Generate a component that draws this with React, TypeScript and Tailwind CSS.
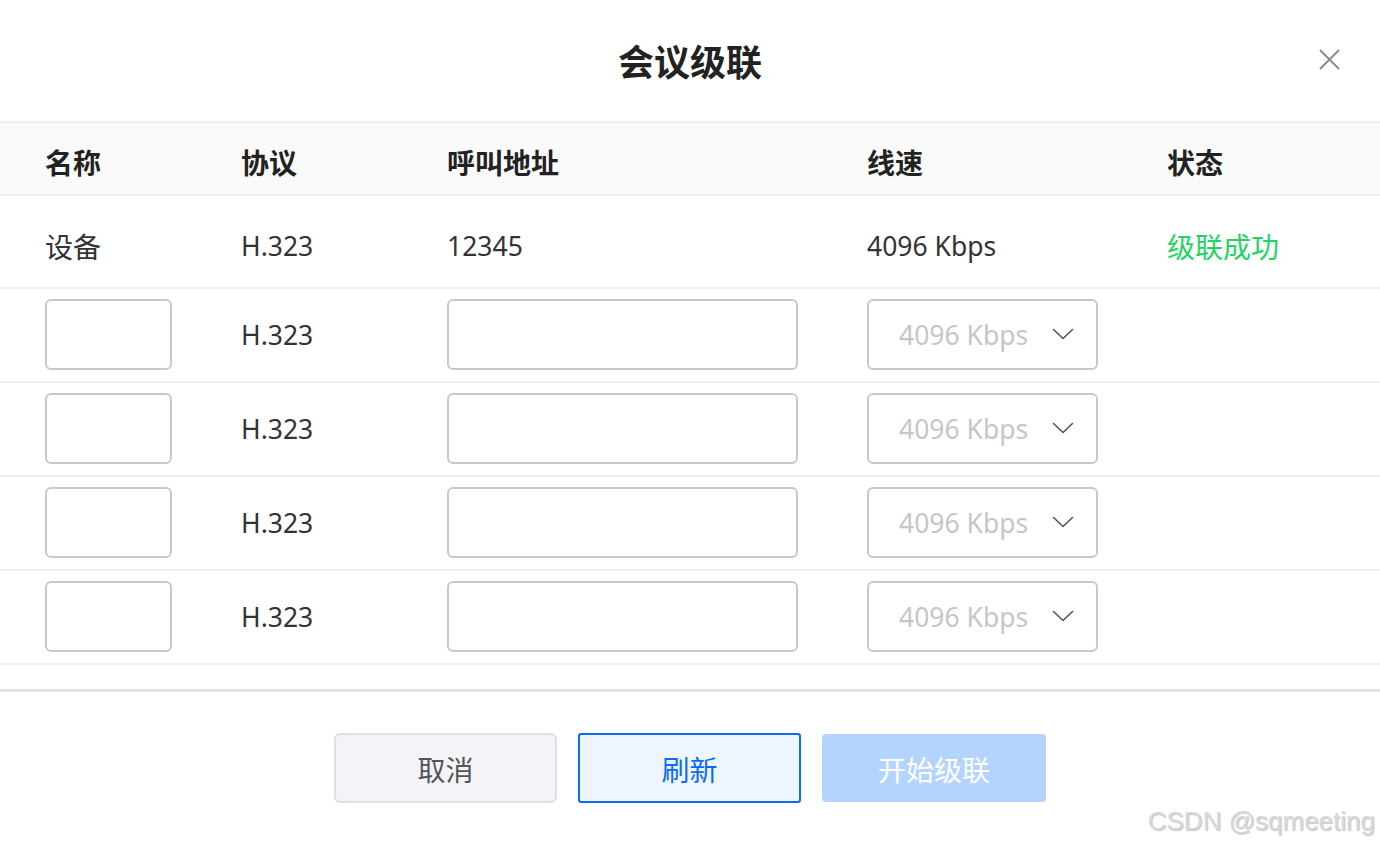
import { useState } from "react";

const font = { fontFamily: '"Noto Sans", "Noto Sans CJK SC", sans-serif' };

const rows = [1, 2, 3, 4];

function Chevron() {
  return (
    <svg width="22" height="12" viewBox="0 0 22 12" fill="none">
      <path d="M1.5 1.5 L11 10.5 L20.5 1.5" stroke="#555" strokeWidth="1.6" strokeLinecap="round" strokeLinejoin="round" />
    </svg>
  );
}

function EditRow() {
  const [name, setName] = useState("");
  const [addr, setAddr] = useState("");
  return (
    <div className="grid grid-cols-[196px_206px_420px_300px_1fr] items-center h-[94px] pl-[45px] pb-[2px] border-b-2 border-[#eef0f4]">
      <input
        value={name}
        onChange={(e) => setName(e.target.value)}
        className="w-[127px] h-[71px] rounded-[6px] border-2 border-[#c9c9c9] outline-none px-3 text-[26.5px] text-[#333]"
      />
      <div className="text-[26.5px] text-[#333] pt-[4px]">H.323</div>
      <input
        value={addr}
        onChange={(e) => setAddr(e.target.value)}
        className="w-[351px] h-[71px] rounded-[6px] border-2 border-[#c9c9c9] outline-none px-4 text-[26.5px] text-[#333]"
      />
      <div className="w-[231px] h-[71px] rounded-[6px] border-2 border-[#c9c9c9] flex items-center justify-between pl-[30px] pr-[22px]">
        <span className="text-[26.5px] text-[#c6c6c6] pt-[4px]">4096 Kbps</span>
        <Chevron />
      </div>
      <div />
    </div>
  );
}

export default function App() {
  return (
    <div className="relative w-full h-[846px] bg-white overflow-hidden" style={font}>
      <div className="h-[123px] border-b-2 border-[#eceff4] flex items-center justify-center relative">
        <h1 className="text-[36px] font-bold text-[#222] pt-[4px]">会议级联</h1>
        <button className="absolute right-[40px] top-[49px] w-[21px] h-[21px]">
          <svg width="21" height="21" viewBox="0 0 21 21">
            <path d="M1 1 L20 20 M20 1 L1 20" stroke="#8c8c8c" strokeWidth="2" />
          </svg>
        </button>
      </div>

      <div className="grid grid-cols-[196px_206px_420px_300px_1fr] items-center h-[73px] pl-[45px] pt-[8px] bg-[#fafafa] border-b-2 border-[#eceff4] text-[28px] font-bold text-[#222]">
        <div>名称</div>
        <div>协议</div>
        <div>呼叫地址</div>
        <div>线速</div>
        <div>状态</div>
      </div>

      <div className="grid grid-cols-[196px_206px_420px_300px_1fr] items-center h-[93px] pl-[45px] pt-[10px] border-b-2 border-[#eef0f4] text-[26.5px] text-[#333]">
        <div className="text-[28px]">设备</div>
        <div>H.323</div>
        <div>12345</div>
        <div>4096 Kbps</div>
        <div className="text-[28px] text-[#22d462]">级联成功</div>
      </div>

      {rows.map((r) => (
        <EditRow key={r} />
      ))}

      <div className="h-[27px] border-b-[3px] border-[#e3e3e6]" />

      <div className="flex justify-center gap-[21px] pt-[41px]">
        <button className="w-[223px] h-[70px] rounded-[6px] border-2 border-[#dde0e8] bg-[#f4f4f8] text-[28px] text-[#555] pt-[3px]">
          取消
        </button>
        <button className="w-[223px] h-[70px] rounded-[3px] border-2 border-[#0a6cf5] bg-[#eef5ff] text-[28px] text-[#0a6cf5] pt-[3px]">
          刷新
        </button>
        <button className="w-[224px] h-[68px] mt-[1px] rounded-[4px] bg-[#b3d4ff] text-[28px] text-white pt-[3px]">
          开始级联
        </button>
      </div>

      <div
        className="absolute right-[5px] bottom-[5px] text-[26px] text-[#d8d8d8]"
        style={{ fontFamily: '"Liberation Sans", Arial, sans-serif', textShadow: "1px 1px 1px #c4c4c4" }}
      >
        CSDN @sqmeeting
      </div>
    </div>
  );
}
